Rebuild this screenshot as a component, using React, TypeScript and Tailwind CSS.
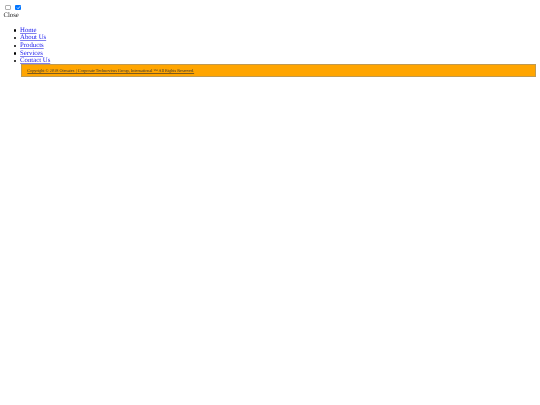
const links = ["Home", "About Us", "Products", "Services", "Contact Us"];

export default function App() {
  return (
    <div className="min-h-[405px] bg-white p-[3.4px] font-['Liberation_Serif',serif] text-[6.75px] leading-[7.6px] text-[#222222] [text-rendering:geometricPrecision] blur-[0.3px]">
      <div className="flex h-[8.6px] items-center gap-[4.5px] pl-[2px]">
        <input type="checkbox" className="h-[5.6px] w-[5.6px] appearance-none rounded-[1px] border border-[#b0b0b0] bg-white" />
        <label className="relative flex h-[5.6px] w-[5.6px] items-center justify-center rounded-[1px] bg-[#0075ff]">
          <input type="checkbox" defaultChecked className="absolute h-full w-full appearance-none" />
          <svg viewBox="0 0 10 10" className="h-[5px] w-[5px]">
            <path d="M2 5.2 L4.2 7.4 L8 2.8" fill="none" stroke="white" strokeWidth="1.6" />
          </svg>
        </label>
      </div>
      <div>Close</div>

      {/* Menu */}
      <ul className="mt-[7.2px] pl-[10.2px]">
        {links.map((link) => (
          <li key={link} className="flex items-center gap-[4px]">
            <span className="h-[2.5px] w-[2.5px] rounded-full bg-black" />
            <a href="#" className="text-[#1a1aee] underline decoration-[#8080ee]">
              {link}
            </a>
          </li>
        ))}
      </ul>

      {/* Copyright bar */}
      <div className="ml-[17.5px] mr-[0.6px] -mt-[0.8px] flex h-[13.4px] items-center border border-[#c09a50] bg-[#ffa500] pl-[5.4px] text-[4.26px]">
        <a href="#" className="text-[#333333] underline decoration-[#7a5a20]">
          Copyright © 2018 Otenater. | Corporate Technovirus Group, International ™ All Rights Reserved.
        </a>
      </div>
    </div>
  );
}
